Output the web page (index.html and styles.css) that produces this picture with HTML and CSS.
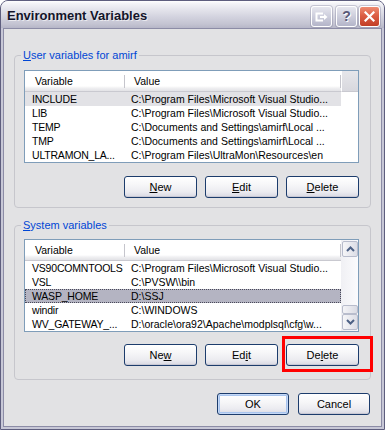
FILE: index.html
```html
<!DOCTYPE html>
<html>
<head>
<meta charset="utf-8">
<title>Environment Variables</title>
<link rel="stylesheet" href="styles.css">
</head>
<body>
<div class="window">
  <div class="titlebar">
    <span class="title">Environment Variables</span>
    <div class="caption-buttons">
      <span class="cbtn monitor">
        <svg width="13" height="11" viewBox="0 0 13 11"><path d="M8 2.5H1.5v7H8" fill="none" stroke="#fff" stroke-width="2"/><path d="M5 6h5" stroke="#fff" stroke-width="2"/><path d="M9 3l3.5 3L9 9z" fill="#fff"/></svg>
      </span>
      <span class="cbtn help">?</span>
      <span class="cbtn close">
        <svg width="11" height="11" viewBox="0 0 11 11"><path d="M1.5 1.5l8 8M9.5 1.5l-8 8" stroke="#fff" stroke-width="2.2" stroke-linecap="square"/></svg>
      </span>
    </div>
  </div>
  <div class="client">
    <fieldset class="group group-user">
      <legend><u>U</u>ser variables for amirf</legend>
      <div class="list">
        <div class="list-main">
          <div class="list-header">
            <div class="col col-var">Variable</div>
            <div class="col col-val">Value</div>
          </div>
          <div class="row inactive"><span class="c1">INCLUDE</span><span class="c2">C:\Program Files\Microsoft Visual Studio...</span></div>
          <div class="row"><span class="c1">LIB</span><span class="c2">C:\Program Files\Microsoft Visual Studio...</span></div>
          <div class="row"><span class="c1">TEMP</span><span class="c2">C:\Documents and Settings\amirf\Local ...</span></div>
          <div class="row"><span class="c1">TMP</span><span class="c2">C:\Documents and Settings\amirf\Local ...</span></div>
          <div class="row"><span class="c1">ULTRAMON_LA...</span><span class="c2">C:\Program Files\UltraMon\Resources\en</span></div>
        </div>
        <div class="header-fill"></div>
      </div>
      <div class="btn-row">
        <button class="btn"><u>N</u>ew</button>
        <button class="btn"><u>E</u>dit</button>
        <button class="btn"><u>D</u>elete</button>
      </div>
    </fieldset>

    <fieldset class="group group-system">
      <legend><u>S</u>ystem variables</legend>
      <div class="list">
        <div class="list-main">
          <div class="list-header">
            <div class="col col-var">Variable</div>
            <div class="col col-val">Value</div>
          </div>
          <div class="row"><span class="c1">VS90COMNTOOLS</span><span class="c2">C:\Program Files\Microsoft Visual Studio...</span></div>
          <div class="row"><span class="c1">VSL</span><span class="c2">C:\PVSW\\bin</span></div>
          <div class="row selected"><span class="c1">WASP_HOME</span><span class="c2">D:\SSJ</span></div>
          <div class="row"><span class="c1">windir</span><span class="c2">C:\WINDOWS</span></div>
          <div class="row"><span class="c1">WV_GATEWAY_...</span><span class="c2">D:\oracle\ora92\Apache\modplsql\cfg\w...</span></div>
        </div>
        <div class="scrollbar">
          <span class="sbtn"><svg width="9" height="6" viewBox="0 0 9 6"><path d="M1 5l3.5-3.5L8 5" fill="none" stroke="#4d6185" stroke-width="2"/></svg></span>
          <span class="track"></span>
          <span class="thumb"></span>
          <span class="sbtn"><svg width="9" height="6" viewBox="0 0 9 6"><path d="M1 1l3.5 3.5L8 1" fill="none" stroke="#4d6185" stroke-width="2"/></svg></span>
        </div>
      </div>
      <div class="btn-row">
        <button class="btn">Ne<u>w</u></button>
        <button class="btn">Ed<u>i</u>t</button>
        <button class="btn highlighted">De<u>l</u>ete</button>
      </div>
    </fieldset>

    <div class="dialog-buttons">
      <button class="btn default">OK</button>
      <button class="btn">Cancel</button>
    </div>
  </div>
</div>
</body>
</html>
```

FILE: styles.css
```css
* { box-sizing: border-box; }

html, body {
  margin: 0;
  padding: 0;
  background: #ffffff;
}

body {
  font-family: "Liberation Sans", Arial, sans-serif;
  font-size: 11px;
  color: #000;
}

.window {
  width: 385px;
  height: 430px;
  border: 1px solid #5e5e7e;
  border-radius: 8px 8px 0 0;
  background: #c7c7d6;
  display: flex;
  flex-direction: column;
  overflow: hidden;
}

.titlebar {
  flex: none;
  height: 27px;
  display: flex;
  align-items: center;
  padding: 0 4px 0 6px;
  background: linear-gradient(to bottom, #ffffff 0, #f3f3f7 10%, #e2e2ea 35%, #d2d2de 60%, #c4c4d2 85%, #b6b6c8 100%);
}

.title {
  flex: 1;
  font: bold 13px "Liberation Sans", Arial, sans-serif;
  color: #14142a;
  padding-top: 2px;
  text-shadow: 1px 1px 0 rgba(255, 255, 255, 0.6);
}

.caption-buttons {
  display: flex;
  align-items: center;
  gap: 2px;
  margin-top: 3px;
}

.cbtn {
  width: 21px;
  height: 21px;
  border: 1px solid #ffffff;
  border-radius: 3px;
  display: flex;
  align-items: center;
  justify-content: center;
  background: linear-gradient(to bottom, #e6e6ee 0, #cfd0de 45%, #b4b5c9 100%);
  box-shadow: 0 0 0 1px rgba(120, 120, 150, 0.35);
}

.cbtn.monitor {
  margin-right: 2px;
}

.cbtn.help {
  font: bold 14px "Liberation Sans", Arial, sans-serif;
  color: #5a5a78;
  text-shadow: 1px 1px 0 #ffffff;
}

.cbtn.close {
  background: linear-gradient(to bottom, #ee8c72 0, #dc5e44 45%, #c23e26 100%);
}

.client {
  flex: 1;
  margin: 0 2px 2px 2px;
  border: 1px solid #8c8ca6;
  background: #e2e2e4;
  padding: 20px 10px 0 10px;
  display: flex;
  flex-direction: column;
}

.group {
  margin: 0;
  min-width: 0;
  border: 1px solid #c6c6cc;
  border-radius: 4px;
  padding: 8px 11px 9px 9px;
}

.group-system {
  margin-top: 11px;
  padding-top: 7px;
  padding-bottom: 13px;
}

legend {
  color: #0046d5;
  font-size: 11px;
  line-height: 13px;
  padding: 0 2px;
  margin-left: -3px;
}

.list {
  height: 93px;
  border: 1px solid #7f9db9;
  background: #ffffff;
  display: flex;
  font-size: 10.5px;
}

.list-main {
  width: 316px;
  flex: none;
  display: flex;
  flex-direction: column;
}

.list-header {
  height: 21px;
  display: flex;
  background: linear-gradient(to bottom, #ffffff 0, #ffffff 75%, #f0f0f2 85%, #e2e2e6 100%);
  border-bottom: 1px solid #c9c9d0;
}

.col {
  display: flex;
  align-items: center;
  padding-bottom: 1px;
  background: linear-gradient(#c5c5cc, #c5c5cc) no-repeat right 4px / 1px 13px;
}

.col-var {
  width: 100px;
  padding-left: 10px;
}

.col-val {
  width: 216px;
  padding-left: 9px;
}

.header-fill {
  flex: 1;
  height: 21px;
  background: linear-gradient(to bottom, #e6e6ea, #d8d8de);
  border-bottom: 1px solid #c9c9d0;
  border-left: 1px solid #ffffff;
}

.row {
  height: 14px;
  display: flex;
  align-items: center;
  white-space: nowrap;
  overflow: hidden;
}

.row.inactive {
  background: #e2e2e6;
}

.row.selected {
  background: #b4b4c2;
  outline: 1px dotted #4a4a5a;
  outline-offset: -1px;
}

.c1 {
  width: 100px;
  flex: none;
  padding-left: 7px;
  letter-spacing: -0.2px;
  overflow: hidden;
}

.c2 {
  flex: 1;
  padding-left: 6px;
  overflow: hidden;
}

.scrollbar {
  flex: 1;
  display: flex;
  flex-direction: column;
  background: linear-gradient(to right, #f0f0f4, #fbfbfd);
  padding: 1px 0;
}

.sbtn {
  height: 16px;
  margin: 0 0 0 1px;
  border: 1px solid #b8bccc;
  border-radius: 2px;
  background: linear-gradient(to right, #f6f6f8, #dcdde6);
  display: flex;
  align-items: center;
  justify-content: center;
  flex: none;
}

.track {
  flex: 1;
}

.thumb {
  height: 9px;
  margin: 0 0 0 1px;
  border: 1px solid #b8bccc;
  border-radius: 2px;
  background: linear-gradient(to right, #f4f4f7, #dadbe4);
  flex: none;
}

.btn-row {
  display: flex;
  justify-content: flex-end;
  gap: 8px;
  margin-top: 13px;
}

.group-system .btn-row {
  margin-top: 12px;
}

.btn {
  width: 73px;
  height: 22px;
  padding: 0;
  margin: 0;
  border: 1px solid #1c3c6c;
  border-radius: 3px;
  background: linear-gradient(to bottom, #ffffff 0, #f6f6f8 40%, #ebebf0 75%, #d8d8e2 100%);
  box-shadow: inset 0 -1px 0 #c8c8d4;
  font-family: "Liberation Sans", Arial, sans-serif;
  font-size: 11px;
  color: #000;
  position: relative;
}

.btn.default {
  box-shadow: inset 0 0 0 1px #c4d8f6, inset 0 0 0 2px #a8c4ee;
}

.btn.highlighted::after {
  content: "";
  position: absolute;
  left: -5px;
  right: -15px;
  top: -9px;
  bottom: -7px;
  border: 3px solid #ff0000;
}

.dialog-buttons {
  display: flex;
  justify-content: flex-end;
  gap: 9px;
  margin-top: 13px;
  padding-right: 1px;
}

.dialog-buttons .btn {
  width: 72px;
}
```
